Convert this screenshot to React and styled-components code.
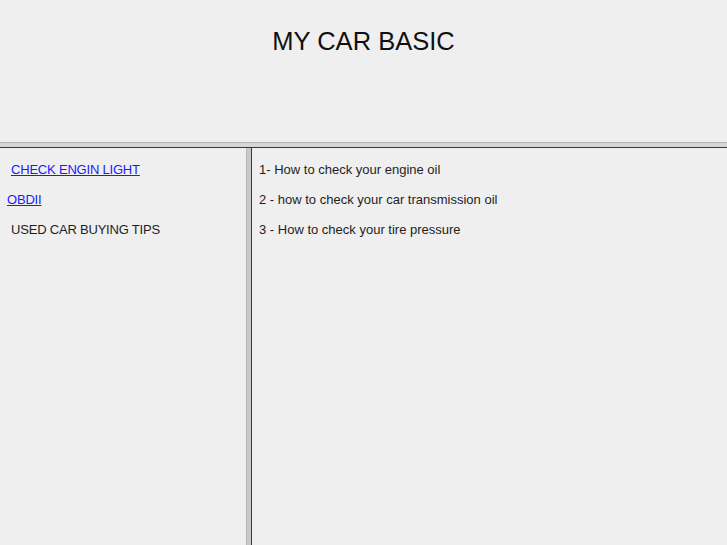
import React from 'react';
import styled, { createGlobalStyle } from 'styled-components';

const GlobalStyle = createGlobalStyle`
  html, body {
    margin: 0;
    padding: 0;
    height: 100%;
    background: #efefef;
  }
  #root {
    height: 100%;
  }
`;

const Page = styled.div`
  display: flex;
  flex-direction: column;
  height: 545px;
  overflow: hidden;
  font-family: 'Liberation Sans', Arial, sans-serif;
  color: #1e1e1e;
  background: #efefef;
`;

const Header = styled.div`
  height: 142px;
  display: flex;
  justify-content: center;
  padding-top: 27px;
  box-sizing: border-box;
`;

const Title = styled.h1`
  margin: 0;
  font-weight: normal;
  font-size: 25.5px;
  line-height: 28px;
  color: #111;
`;

const HDivider = styled.div`
  height: 6px;
  box-sizing: border-box;
  background: #d6d6d6;
  border-top: 1px solid #b4b4b4;
  border-bottom: 1px solid #3a3a3a;
`;

const Body = styled.div`
  flex: 1;
  display: flex;
`;

const Sidebar = styled.ul`
  list-style: none;
  margin: 0;
  padding: 7px 0 0;
  width: 246px;
`;

const Content = styled.ul`
  list-style: none;
  margin: 0;
  padding: 7px 0 0 7px;
  flex: 1;
`;

const Item = styled.li`
  font-size: 13px;
  line-height: 30px;
  padding-left: ${(props) => props.indent || 0}px;
  white-space: nowrap;
  letter-spacing: ${(props) => (props.tight ? '-0.2px' : 'normal')};
`;

const Link = styled.a`
  color: #1a1aff;
  text-decoration: underline;
`;

const VDivider = styled.div`
  width: 6px;
  box-sizing: border-box;
  background: #c9c9c9;
  border-left: 1px solid #b8b8b8;
  border-right: 1px solid #3a3a3a;
`;

const menu = [
  { label: 'CHECK ENGIN LIGHT', href: '#', indent: 11 },
  { label: 'OBDII', href: '#', indent: 7 },
  { label: 'USED CAR BUYING TIPS', indent: 11 },
];

const tips = [
  '1- How to check your engine oil',
  '2 - how to check your car transmission oil',
  '3 - How to check your tire pressure',
];

const App = () => (
  <>
    <GlobalStyle />
    <Page>
      <Header>
        <Title>MY CAR BASIC</Title>
      </Header>
      <HDivider />
      <Body>
        <Sidebar>
          {menu.map((m) => (
            <Item key={m.label} indent={m.indent} tight>
              {m.href ? <Link href={m.href}>{m.label}</Link> : m.label}
            </Item>
          ))}
        </Sidebar>
        <VDivider />
        <Content>
          {tips.map((t) => (
            <Item key={t}>{t}</Item>
          ))}
        </Content>
      </Body>
    </Page>
  </>
);

export default App;
